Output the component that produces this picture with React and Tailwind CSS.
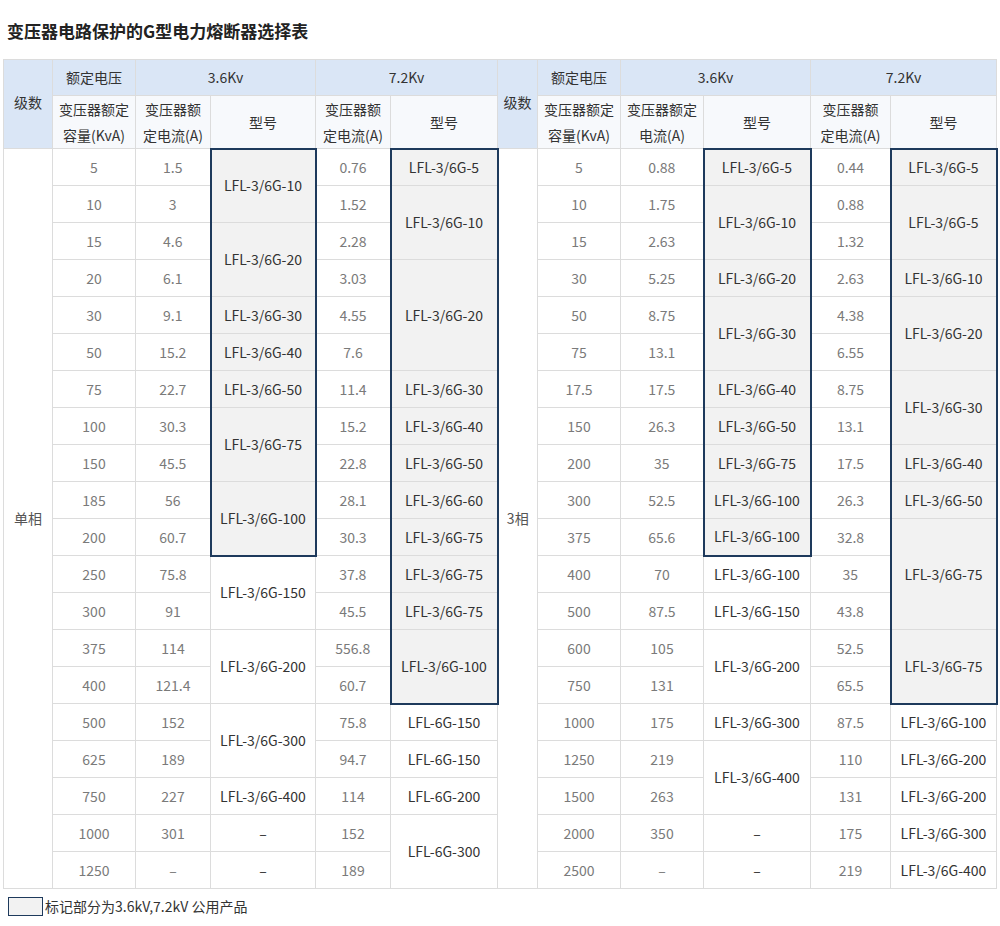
import React from "react";

const L = {
  cap: [5,10,15,20,30,50,75,100,150,185,200,250,300,375,400,500,625,750,1000,1250],
  c36: [1.5,3,4.6,6.1,9.1,15.2,22.7,30.3,45.5,56,60.7,75.8,91,114,121.4,152,189,227,301,"–"],
  m36: [["LFL-3/6G-10",2,1],["LFL-3/6G-20",2,1],["LFL-3/6G-30",1,1],["LFL-3/6G-40",1,1],["LFL-3/6G-50",1,1],["LFL-3/6G-75",2,1],["LFL-3/6G-100",2,1],["LFL-3/6G-150",2,0],["LFL-3/6G-200",2,0],["LFL-3/6G-300",2,0],["LFL-3/6G-400",1,0],["–",1,0],["–",1,0]],
  c72: [0.76,1.52,2.28,3.03,4.55,7.6,11.4,15.2,22.8,28.1,30.3,37.8,45.5,556.8,60.7,75.8,94.7,114,152,189],
  m72: [["LFL-3/6G-5",1,1],["LFL-3/6G-10",2,1],["LFL-3/6G-20",3,1],["LFL-3/6G-30",1,1],["LFL-3/6G-40",1,1],["LFL-3/6G-50",1,1],["LFL-3/6G-60",1,1],["LFL-3/6G-75",1,1],["LFL-3/6G-75",1,1],["LFL-3/6G-75",1,1],["LFL-3/6G-100",2,1],["LFL-6G-150",1,0],["LFL-6G-150",1,0],["LFL-6G-200",1,0],["LFL-6G-300",2,0]],
};
const R = {
  cap: [5,10,15,30,50,75,17.5,150,200,300,375,400,500,600,750,1000,1250,1500,2000,2500],
  c36: [0.88,1.75,2.63,5.25,8.75,13.1,17.5,26.3,35,52.5,65.6,70,87.5,105,131,175,219,263,350,"–"],
  m36: [["LFL-3/6G-5",1,1],["LFL-3/6G-10",2,1],["LFL-3/6G-20",1,1],["LFL-3/6G-30",2,1],["LFL-3/6G-40",1,1],["LFL-3/6G-50",1,1],["LFL-3/6G-75",1,1],["LFL-3/6G-100",1,1],["LFL-3/6G-100",1,1],["LFL-3/6G-100",1,0],["LFL-3/6G-150",1,0],["LFL-3/6G-200",2,0],["LFL-3/6G-300",1,0],["LFL-3/6G-400",2,0],["–",1,0],["–",1,0]],
  c72: [0.44,0.88,1.32,2.63,4.38,6.55,8.75,13.1,17.5,26.3,32.8,35,43.8,52.5,65.5,87.5,110,131,175,219],
  m72: [["LFL-3/6G-5",1,1],["LFL-3/6G-5",2,1],["LFL-3/6G-10",1,1],["LFL-3/6G-20",2,1],["LFL-3/6G-30",2,1],["LFL-3/6G-40",1,1],["LFL-3/6G-50",1,1],["LFL-3/6G-75",3,1],["LFL-3/6G-75",2,1],["LFL-3/6G-100",1,0],["LFL-3/6G-200",1,0],["LFL-3/6G-200",1,0],["LFL-3/6G-300",1,0],["LFL-3/6G-400",1,0]],
};

function startMap(models) {
  const m = {};
  let r = 0;
  models.forEach((x, i) => {
    const hl = x[2] === 1;
    const first = hl && (i === 0 || models[i - 1][2] !== 1);
    const last = hl && (i === models.length - 1 || models[i + 1][2] !== 1);
    m[r] = { text: x[0], span: x[1], hl, first, last };
    r += x[1];
  });
  return m;
}

const num = "border border-[#dcdcdc] text-center text-[#7a7a7a] h-[37px] p-0";
function ModelCell({ c }) {
  let cls = "border border-[#dcdcdc] text-center text-[#333] p-0 ";
  if (c.hl) {
    cls += "bg-[#f2f2f2] border-l-2 border-r-2 border-l-[#1e3a5c] border-r-[#1e3a5c] ";
    if (c.first) cls += "border-t-2 border-t-[#1e3a5c] ";
    if (c.last) cls += "border-b-2 border-b-[#1e3a5c] ";
  }
  return <td rowSpan={c.span} className={cls}>{c.text}</td>;
}

export default function App() {
  const lm36 = startMap(L.m36), lm72 = startMap(L.m72), rm36 = startMap(R.m36), rm72 = startMap(R.m72);
  const hd1 = "border border-[#dcdcdc] bg-[#dae6f6] text-[#333] font-normal text-center";
  const hd2 = "border border-[#dcdcdc] bg-[#f7f9fc] text-[#333] font-normal text-center leading-[26px]";
  return (
    <div className="bg-white w-[1000px] h-[926px] text-[14px]" style={{ fontFamily: '"Noto Sans CJK SC", "Noto Sans", sans-serif' }}>
      <div className="pt-[18px] pl-[7px] h-[59px] text-[17px] font-bold text-[#222]">变压器电路保护的G型电力熔断器选择表</div>
      <table className="ml-[3px] table-fixed border-collapse w-[993px]">
        <colgroup>
          {[49,83,75,105,75,107,40,83,83,107,80,106].map((w, i) => <col key={i} style={{ width: w }} />)}
        </colgroup>
        <thead>
          <tr className="h-[36px]">
            <th rowSpan={2} className={hd1 + " align-top pt-[32px]"}>级数</th>
            <th className={hd1}>额定电压</th>
            <th colSpan={2} className={hd1}>3.6Kv</th>
            <th colSpan={2} className={hd1}>7.2Kv</th>
            <th rowSpan={2} className={hd1 + " align-top pt-[32px]"}>级数</th>
            <th className={hd1}>额定电压</th>
            <th colSpan={2} className={hd1}>3.6Kv</th>
            <th colSpan={2} className={hd1}>7.2Kv</th>
          </tr>
          <tr className="h-[53px]">
            <th className={hd2}>变压器额定<br />容量(KvA)</th>
            <th className={hd2}>变压器额<br />定电流(A)</th>
            <th className={hd2}>型号</th>
            <th className={hd2}>变压器额<br />定电流(A)</th>
            <th className={hd2}>型号</th>
            <th className={hd2}>变压器额定<br />容量(KvA)</th>
            <th className={hd2}>变压器额定<br />电流(A)</th>
            <th className={hd2}>型号</th>
            <th className={hd2}>变压器额<br />定电流(A)</th>
            <th className={hd2}>型号</th>
          </tr>
        </thead>
        <tbody>
          {L.cap.map((_, r) => (
            <tr key={r} className="h-[37px]">
              {r === 0 && <td rowSpan={20} className="border border-[#dcdcdc] text-center text-[#555]">单相</td>}
              <td className={num}>{L.cap[r]}</td>
              <td className={num}>{L.c36[r]}</td>
              {lm36[r] && <ModelCell c={lm36[r]} />}
              <td className={num}>{L.c72[r]}</td>
              {lm72[r] && <ModelCell c={lm72[r]} />}
              {r === 0 && <td rowSpan={20} className="border border-[#dcdcdc] text-center text-[#555]">3相</td>}
              <td className={num}>{R.cap[r]}</td>
              <td className={num}>{R.c36[r]}</td>
              {rm36[r] && <ModelCell c={rm36[r]} />}
              <td className={num}>{R.c72[r]}</td>
              {rm72[r] && <ModelCell c={rm72[r]} />}
            </tr>
          ))}
        </tbody>
      </table>
      <div className="flex items-center mt-[7px] ml-[8px] text-[#333]">
        <span className="inline-block w-[35px] h-[19px] bg-[#f2f2f2] border border-[#1e3a5c]"></span>
        <span className="ml-[2px]">标记部分为3.6kV,7.2kV 公用产品</span>
      </div>
    </div>
  );
}
